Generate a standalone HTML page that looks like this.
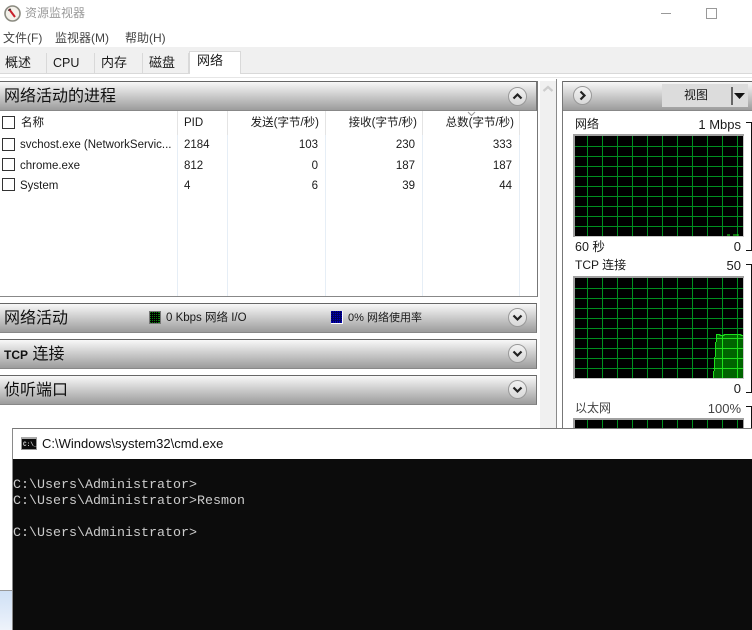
<!DOCTYPE html>
<html><head><meta charset="utf-8">
<style>
html,body{margin:0;padding:0;background:#fff}
body{width:752px;height:630px;overflow:hidden;position:relative;font-family:"Liberation Sans","Noto Sans CJK SC",sans-serif;color:#1a1a1a}
.a{position:absolute;white-space:nowrap}
.t{font-size:11.5px;line-height:16px}
.r{text-align:right}
.cb{position:absolute;left:2px;width:11px;height:11px;border:1px solid #333;background:#fff}
.bar{position:absolute;left:0;width:537px;box-sizing:border-box;border-top:1px solid #666;border-bottom:1px solid #888;border-right:1px solid #777;background:linear-gradient(#f8f8f8,#9c9c9c)}
.h{font-size:16px;line-height:22px;left:4px;color:#111}
.btn{position:absolute;left:508px;width:17px;height:17px;border:1px solid #999;border-radius:50%;background:linear-gradient(#f2f2f2,#d8d8d8)}
.cl{position:absolute;top:111px;height:185px;width:1px;background:#e6eef6}
.tab{position:absolute;top:53px;height:20px;background:#f0f0f0;border-right:1px solid #d9d9d9;box-sizing:border-box}
.tt{position:absolute;font-size:13px;line-height:18px;white-space:nowrap}
.cmd{font-family:"Liberation Mono",monospace;font-size:13.33px;line-height:16px;color:#ccc;left:13px}
.hd{font-size:11.5px}
</style></head><body>

<svg class="a" style="left:4px;top:5px" width="17" height="17" viewBox="0 0 17 17"><circle cx="8.5" cy="8.5" r="7.5" fill="#f4f1ea" stroke="#8a8a80" stroke-width="1.6"/><path d="M5 4 L11 12" stroke="#c8202a" stroke-width="2"/><path d="M4 5.5 L7 4" stroke="#333" stroke-width="1"/></svg>
<div class="a" style="left:25px;top:5px;font-size:12px;line-height:17px;color:#9a9a9a">资源监视器</div>
<div class="a" style="left:661px;top:13px;width:10px;height:1px;background:#999"></div>
<div class="a" style="left:706px;top:8px;width:9px;height:9px;border:1px solid #999"></div>

<div class="a" style="left:3px;top:30px;font-size:12px;line-height:17px;color:#444">文件(F)</div>
<div class="a" style="left:55px;top:30px;font-size:12px;line-height:17px;color:#444">监视器(M)</div>
<div class="a" style="left:125px;top:30px;font-size:12px;line-height:17px;color:#444">帮助(H)</div>

<div class="a" style="left:0;top:47px;width:752px;height:26px;background:#f0f0f0"></div>
<div class="a" style="left:0;top:73px;width:752px;height:1px;background:#d9d9d9"></div>
<div class="a" style="left:0;top:77px;width:752px;height:1px;background:#e6e6e6"></div>
<div class="tab" style="left:0;width:47px"></div>
<div class="tab" style="left:47px;width:48px"></div>
<div class="tab" style="left:95px;width:48px"></div>
<div class="tab" style="left:143px;width:46px"></div>
<div class="tab" style="left:189px;width:52px;top:51px;height:23px;background:#fff;border:1px solid #d9d9d9;border-bottom:0"></div>
<div class="tt" style="left:5px;top:54px">概述</div>
<div class="tt" style="left:53px;top:54px;font-size:12.5px">CPU</div>
<div class="tt" style="left:101px;top:54px">内存</div>
<div class="tt" style="left:149px;top:54px">磁盘</div>
<div class="tt" style="left:197px;top:52px">网络</div>

<!-- left panel -->
<div class="a" style="left:0;top:81px;width:538px;height:216px;box-sizing:border-box;border-right:1px solid #777;border-bottom:1px solid #888"></div>
<div class="bar" style="top:81px;height:30px"></div>
<div class="a h" style="top:86px">网络活动的进程</div>
<div class="btn" style="top:87px"></div>
<svg class="a" style="left:508px;top:87px" width="19" height="19"><path d="M5.5 11.5 L9.5 7.5 L13.5 11.5" fill="none" stroke="#222" stroke-width="2.2"/></svg>

<div class="cl" style="left:177px;background:#e4e4e4;height:24px"></div>
<div class="cl" style="left:177px;top:135px;height:161px"></div>
<div class="cl" style="left:227px;background:#e4e4e4;height:24px"></div>
<div class="cl" style="left:227px;top:135px;height:161px"></div>
<div class="cl" style="left:325px;background:#e4e4e4;height:24px"></div>
<div class="cl" style="left:325px;top:135px;height:161px"></div>
<div class="cl" style="left:422px;background:#e4e4e4;height:24px"></div>
<div class="cl" style="left:422px;top:135px;height:161px"></div>
<div class="cl" style="left:519px;background:#e4e4e4;height:24px"></div>
<div class="cl" style="left:519px;top:135px;height:161px"></div>

<div class="cb" style="top:116px"></div>
<div class="a t" style="left:21px;top:115px">名称</div>
<div class="a t" style="left:184px;top:115px">PID</div>
<div class="a t r hd" style="left:228px;top:115px;width:91px">发送(字节/秒)</div>
<div class="a t r hd" style="left:326px;top:115px;width:91px">接收(字节/秒)</div>
<div class="a t r hd" style="left:423px;top:115px;width:91px">总数(字节/秒)</div>
<svg class="a" style="left:467px;top:111px" width="10" height="6"><path d="M1 1 L4.5 4.5 L8 1" fill="none" stroke="#999"/></svg>

<div class="cb" style="top:138px"></div>
<div class="a t" style="left:20px;top:137px">svchost.exe (NetworkServic...</div>
<div class="a t" style="left:184px;top:137px">2184</div>
<div class="a t r" style="left:228px;top:137px;width:90px">103</div>
<div class="a t r" style="left:326px;top:137px;width:89px">230</div>
<div class="a t r" style="left:423px;top:137px;width:89px">333</div>

<div class="cb" style="top:158px"></div>
<div class="a t" style="left:20px;top:158px">chrome.exe</div>
<div class="a t" style="left:184px;top:158px">812</div>
<div class="a t r" style="left:228px;top:158px;width:90px">0</div>
<div class="a t r" style="left:326px;top:158px;width:89px">187</div>
<div class="a t r" style="left:423px;top:158px;width:89px">187</div>

<div class="cb" style="top:178px"></div>
<div class="a t" style="left:20px;top:178px">System</div>
<div class="a t" style="left:184px;top:178px">4</div>
<div class="a t r" style="left:228px;top:178px;width:90px">6</div>
<div class="a t r" style="left:326px;top:178px;width:89px">39</div>
<div class="a t r" style="left:423px;top:178px;width:89px">44</div>

<!-- collapsed bars -->
<div class="bar" style="top:303px;height:30px"></div>
<div class="a h" style="top:308px">网络活动</div>
<svg class="a" style="left:149px;top:311px" width="12" height="13" shape-rendering="crispEdges"><rect width="12" height="13" fill="#777"/><rect x="1" y="1" width="10" height="11" fill="#0a7a0a"/><path d="M2.5 1V12M4.5 1V12M6.5 1V12M8.5 1V12M1 2.5H11M1 4.5H11M1 6.5H11M1 8.5H11M1 10.5H11" stroke="#000" stroke-width="1"/></svg>
<div class="a" style="left:166px;top:310px;font-size:11.5px;line-height:17px">0 Kbps 网络 I/O</div>
<svg class="a" style="left:331px;top:311px" width="12" height="13" shape-rendering="crispEdges"><rect width="12" height="13" fill="#fff"/><rect width="11" height="12" fill="#0000c0"/><path d="M1.5 0V12M3.5 0V12M5.5 0V12M7.5 0V12M9.5 0V12M0 1.5H11M0 3.5H11M0 5.5H11M0 7.5H11M0 9.5H11" stroke="#000060" stroke-width="1"/></svg>
<div class="a" style="left:348px;top:310px;font-size:11px;line-height:17px">0% 网络使用率</div>
<div class="btn" style="top:308px"></div>
<svg class="a" style="left:508px;top:308px" width="19" height="19"><path d="M5.5 7.5 L9.5 11.5 L13.5 7.5" fill="none" stroke="#222" stroke-width="2.2"/></svg>

<div class="bar" style="top:339px;height:30px"></div>
<div class="a h" style="top:344px"><b style="font-size:12px">TCP</b> 连接</div>
<div class="btn" style="top:344px"></div>
<svg class="a" style="left:508px;top:344px" width="19" height="19"><path d="M5.5 7.5 L9.5 11.5 L13.5 7.5" fill="none" stroke="#222" stroke-width="2.2"/></svg>

<div class="bar" style="top:375px;height:30px"></div>
<div class="a h" style="top:380px">侦听端口</div>
<div class="btn" style="top:380px"></div>
<svg class="a" style="left:508px;top:380px" width="19" height="19"><path d="M5.5 7.5 L9.5 11.5 L13.5 7.5" fill="none" stroke="#222" stroke-width="2.2"/></svg>

<!-- scrollbar -->
<div class="a" style="left:540px;top:81px;width:16px;height:348px;background:#f0f0f0"></div>
<svg class="a" style="left:541px;top:84px" width="14" height="10"><path d="M2.5 7 L7 3 L11.5 7" fill="none" stroke="#cdcdcd" stroke-width="2.2"/></svg>
<div class="a" style="left:556px;top:79px;width:1px;height:350px;background:#8a8a8a"></div>

<!-- right panel -->
<div class="a" style="left:562px;top:81px;width:1px;height:348px;background:#777"></div>
<div class="a" style="left:563px;top:81px;width:189px;height:30px;box-sizing:border-box;border-top:1px solid #666;border-bottom:1px solid #888;background:linear-gradient(#f8f8f8,#9c9c9c)"></div>
<div class="btn" style="left:573px;top:86px"></div>
<svg class="a" style="left:573px;top:86px" width="19" height="19"><path d="M7.5 5.5 L11.5 9.5 L7.5 13.5" fill="none" stroke="#222" stroke-width="2.2"/></svg>
<div class="a" style="left:662px;top:84px;width:86px;height:23px;background:#dcdcdc"></div>
<div class="a" style="left:662px;top:84px;width:68px;text-align:center;font-size:12px;line-height:23px">视图</div>
<div class="a" style="left:731px;top:87px;width:2px;height:18px;background:#666"></div>
<svg class="a" style="left:733px;top:92px" width="14" height="8"><path d="M1 1 H12 L6.5 7 Z" fill="#111"/></svg>

<div class="a" style="left:575px;top:116px;font-size:12px;line-height:17px">网络</div>
<div class="a r" style="left:660px;top:116px;width:81px;font-size:13px;line-height:17px">1 Mbps</div>
<div class="a" style="left:746px;top:122px;width:5px;height:127px;border:1px solid #111;border-left:0"></div>

<svg class="a" style="left:573px;top:134px" width="171" height="103" shape-rendering="crispEdges">
<rect width="171" height="103" fill="#c8c8c8"/><path d="M0 0H171V2H2V103H0Z" fill="#a0a0a0"/><rect x="2" y="2" width="168" height="100" fill="#000"/>
<path d="M14.5 2V102M29.5 2V102M44.5 2V102M59.5 2V102M74.5 2V102M89.5 2V102M104.5 2V102M119.5 2V102M134.5 2V102M149.5 2V102M164.5 2V102M2 12.5H170M2 22.5H170M2 32.5H170M2 42.5H170M2 52.5H170M2 62.5H170M2 72.5H170M2 82.5H170M2 92.5H170" stroke="#009020" stroke-width="1"/>
<path d="M154 101H157M160 101H166" stroke="#22ee22" stroke-width="1"/>
</svg>
<div class="a" style="left:575px;top:239px;font-size:12.5px;line-height:17px">60 秒</div>
<div class="a r" style="left:700px;top:238px;width:41px;font-size:13px;line-height:17px">0</div>

<div class="a" style="left:575px;top:257px;font-size:12px;line-height:17px">TCP 连接</div>
<div class="a r" style="left:700px;top:257px;width:41px;font-size:13px;line-height:17px">50</div>
<div class="a" style="left:746px;top:264px;width:5px;height:127px;border:1px solid #111;border-left:0"></div>

<svg class="a" style="left:573px;top:276px" width="171" height="103" shape-rendering="crispEdges">
<rect width="171" height="103" fill="#c8c8c8"/><path d="M0 0H171V2H2V103H0Z" fill="#a0a0a0"/><rect x="2" y="2" width="168" height="100" fill="#000"/>
<path d="M140 102V95H141V81H142V66H143V58H147V59H151V58H168V59H170V102Z" fill="#006400"/>
<path d="M14.5 2V102M29.5 2V102M44.5 2V102M59.5 2V102M74.5 2V102M89.5 2V102M104.5 2V102M119.5 2V102M134.5 2V102M149.5 2V102M164.5 2V102M2 12.5H170M2 22.5H170M2 32.5H170M2 42.5H170M2 52.5H170M2 62.5H170M2 72.5H170M2 82.5H170M2 92.5H170" stroke="#009020" stroke-width="1"/>
<path d="M140.5 102V95M141.5 95V81M142.5 81V66M143.5 66V58.5H147V59.5H151V58.5H168V59.5H170M149.5 59V102M164.5 59V102M143 62.5H170M142 72.5H170M141 82.5H170M140 92.5H170" fill="none" stroke="#1ee01e" stroke-width="1"/>
</svg>
<div class="a r" style="left:700px;top:380px;width:41px;font-size:13px;line-height:17px">0</div>

<div class="a" style="left:575px;top:400px;font-size:12px;line-height:17px;color:#444">以太网</div>
<div class="a r" style="left:700px;top:400px;width:41px;font-size:13px;line-height:17px;color:#444">100%</div>
<div class="a" style="left:746px;top:406px;width:5px;height:30px;border-top:1px solid #111;border-right:1px solid #111"></div>

<svg class="a" style="left:573px;top:418px" width="171" height="14" shape-rendering="crispEdges">
<rect width="171" height="14" fill="#a0a0a0"/><rect x="2" y="2" width="168" height="12" fill="#000"/>
<path d="M14.5 2V14M29.5 2V14M44.5 2V14M59.5 2V14M74.5 2V14M89.5 2V14M104.5 2V14M119.5 2V14M134.5 2V14M149.5 2V14M164.5 2V14" stroke="#009020"/>
</svg>

<!-- bottom-left desktop strip -->
<div class="a" style="left:0;top:590px;width:13px;height:40px;background:linear-gradient(#cfe0f5,#eef3fb);border-top:1px solid #999;box-sizing:border-box"></div>

<!-- cmd window -->
<div class="a" style="left:12px;top:428px;width:740px;height:202px;background:#fff;border-left:1px solid #8a8a8a;border-top:1px solid #777;box-sizing:border-box"></div>
<div class="a" style="left:21px;top:437px;width:16px;height:13px;background:#0c0c0c;border:1px solid #999;border-top:2px solid #aaa;box-sizing:border-box"></div>
<div class="a" style="left:23px;top:441px;font-family:'Liberation Mono',monospace;font-size:6px;line-height:7px;font-weight:bold;color:#ddd">C:\_</div>
<div class="a" style="left:42px;top:435px;font-size:13px;line-height:17px;color:#111">C:\Windows\system32\cmd.exe</div>
<div class="a" style="left:13px;top:459px;width:739px;height:171px;background:#0c0c0c"></div>
<div class="a cmd" style="top:478px">C:\Users\Administrator&gt;</div>
<div class="a cmd" style="top:494px">C:\Users\Administrator&gt;Resmon</div>
<div class="a cmd" style="top:526px">C:\Users\Administrator&gt;</div>
</body></html>
